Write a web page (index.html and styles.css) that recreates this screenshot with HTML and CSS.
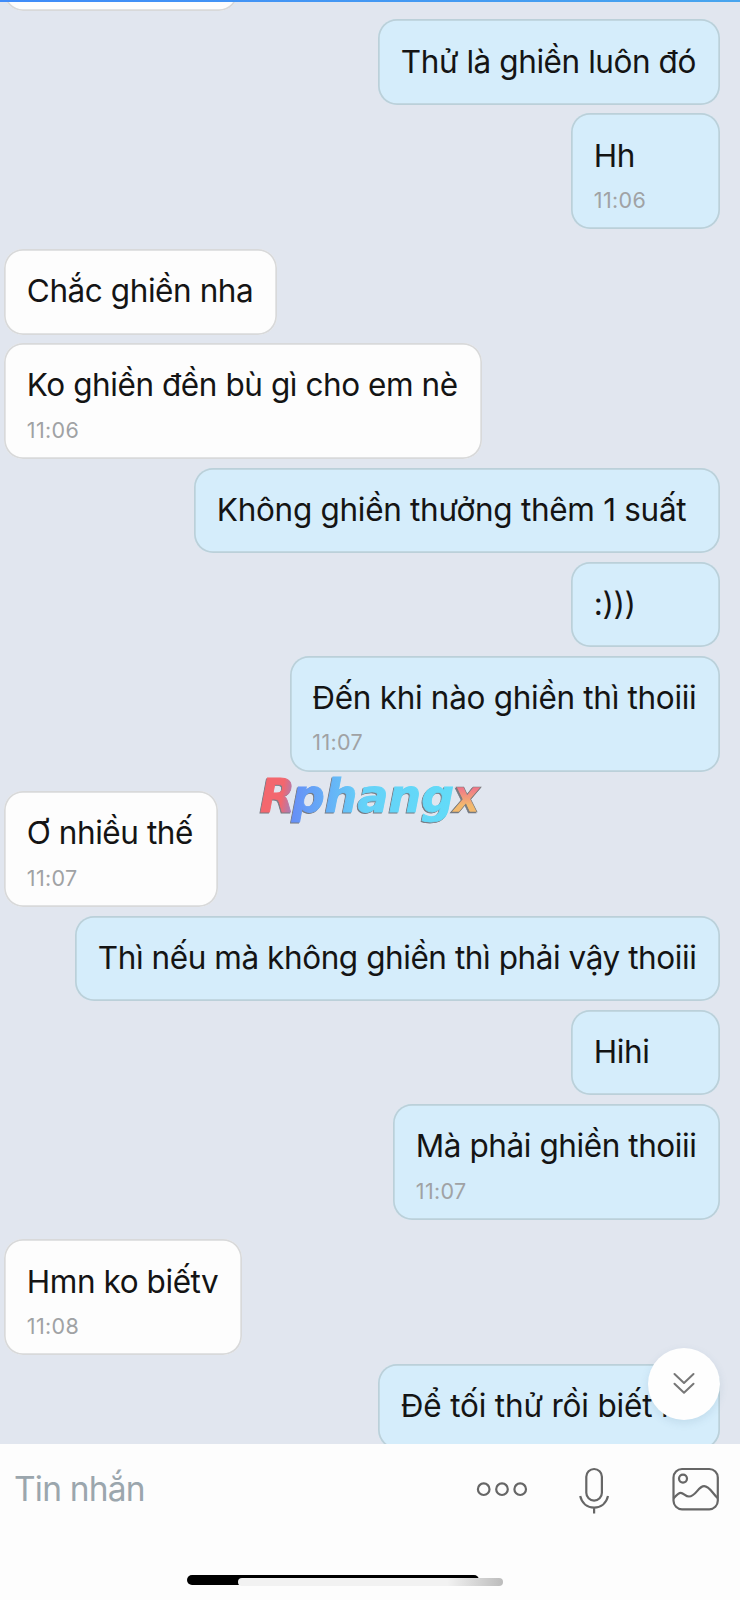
FILE: index.html
```html
<!DOCTYPE html>
<html lang="vi">
<head>
<meta charset="utf-8">
<title>Tin nhắn</title>
<link rel="stylesheet" href="styles.css">
</head>
<body>
<div class="phone">
  <div class="topline"></div>
  <main class="chat">
    <div class="msg in w-top"></div>
    <div class="msg out w-thu"><p>Thử là ghiền luôn đó</p></div>
    <div class="msg out timed w-min"><p>Hh</p><time>11:06</time></div>
    <div class="msg in turn w-chac"><p>Chắc ghiền nha</p></div>
    <div class="msg in timed w-ko"><p>Ko ghiền đền bù gì cho em nè</p><time>11:06</time></div>
    <div class="msg out w-khong"><p>Không ghiền thưởng thêm 1 suất</p></div>
    <div class="msg out w-min"><p>:)))</p></div>
    <div class="msg out timed w-den"><p>Đến khi nào ghiền thì thoiii</p><time>11:07</time></div>
    <div class="msg in timed turn w-nhieu"><p>Ơ nhiều thế</p><time>11:07</time></div>
    <div class="msg out w-thi"><p>Thì nếu mà không ghiền thì phải vậy thoiii</p></div>
    <div class="msg out w-min"><p>Hihi</p></div>
    <div class="msg out timed w-ma"><p>Mà phải ghiền thoiii</p><time>11:07</time></div>
    <div class="msg in timed turn w-hmn"><p>Hmn ko biếtv</p><time>11:08</time></div>
    <div class="msg out w-thu last"><p>Để tối thử rồi biết nè</p></div>
  </main>

  <footer class="composer">
    <div class="row">
      <span class="placeholder">Tin nhắn</span>
      <svg class="ico dots" width="52" height="50" viewBox="476 1464 52 50"><circle cx="483.7" cy="1489.2" r="5.8"/><circle cx="502" cy="1489.2" r="5.8"/><circle cx="520.2" cy="1489.2" r="5.8"/></svg>
      <svg class="ico mic" width="34" height="50" viewBox="577 1464 34 50"><rect x="586.3" y="1469" width="15.6" height="31.6" rx="7.8"/><path d="M580.2 1496c1.600 7 6.800 11.600 13.900 11.600s12.300-4.600 13.900-11.600M594.100 1507.600v6"/></svg>
      <svg class="ico pic" width="50" height="50" viewBox="670 1464 50 50"><rect x="673.500" y="1469" width="44.300" height="40.300" rx="8.500"/><circle cx="683" cy="1478.600" r="4"/><path d="M673.500 1498.500c3-3 4.500-5.700 7.200-5.700 3 0 4.700 3.700 8.300 3.700 7 0 9-10.300 15.200-10.300 5.300 0 8.300 7.300 13.600 12"/></svg>
    </div>
    <div class="home"><div class="home-light"></div></div>
  </footer>

  <button class="scroll" aria-label="Xuống cuối"><svg width="24" height="24" viewBox="0 0 24 24"><path d="M2.500 2l9.500 9 9.500-9M2.500 11.800l9.500 9 9.500-9"/></svg></button>

  <svg class="brand" width="240" height="60" viewBox="250 768 240 60">
    <defs>
      <linearGradient id="red" gradientUnits="userSpaceOnUse" x1="260" y1="790" x2="297" y2="796"><stop offset=".6" stop-color="#f3676e"/><stop offset="1" stop-color="#8c86d0"/></linearGradient>
      <linearGradient id="blue" gradientUnits="userSpaceOnUse" x1="292" y1="0" x2="452" y2="0"><stop offset="0" stop-color="#668ff6"/><stop offset=".45" stop-color="#65d2f8"/><stop offset="1" stop-color="#62dbf8"/></linearGradient>
      <linearGradient id="warm" gradientUnits="userSpaceOnUse" x1="0" y1="786" x2="0" y2="812"><stop offset=".1" stop-color="#f17888"/><stop offset=".75" stop-color="#f2b96e"/></linearGradient>
    </defs>
    <text x="260" y="811.5" textLength="35" lengthAdjust="spacingAndGlyphs" fill="url(#red)" stroke="url(#red)">R</text>
    <text x="292" y="811.5" textLength="162" lengthAdjust="spacingAndGlyphs" fill="url(#blue)" stroke="url(#blue)">phang</text>
    <text class="brand-x" x="453" y="811.5" textLength="27" lengthAdjust="spacingAndGlyphs" fill="url(#warm)">x</text>
  </svg>
</div>
</body>
</html>
```
FILE: styles.css
```css
* { box-sizing: border-box; }
body { margin: 0; background: #e1e6ef; font-family: Inter, "Liberation Sans", sans-serif; }
.phone { position: relative; width: 740px; height: 1600px; overflow: hidden; display: flex; flex-direction: column; }
.topline { position: absolute; z-index: 2; top: 0; left: 0; width: 100%; height: 1.5px; background: linear-gradient(90deg, #3f8bf8, #48a5ee); }
.chat { height: 1443.5px; flex: none; overflow: hidden; display: flex; flex-direction: column; align-items: flex-start; gap: 8.5px; padding: 0 20px 0 4.5px; }

.msg { flex: none; height: 85.5px; padding: 21.3px 0 0 22.8px; box-shadow: inset 0 0 0 1.7px #d8d9da; border-radius: 19px; background: #fdfdfd; white-space: nowrap; }
.msg p { margin: 0; font-size: 31.5px; line-height: 42px; color: #141414; letter-spacing: -.43px; }
.msg time { display: block; margin-top: 10.6px; font-size: 21.5px; line-height: 26px; color: #a0a2a4; letter-spacing: .35px; }
.timed { height: 116px; }
.out { align-self: flex-end; background: #d5edfb; box-shadow: inset 0 0 0 1.7px #bbd0d9; }
.turn { margin-top: 11.2px; }
.in { margin-left: -.5px; }

.w-top { width: 234px; margin-top: -74.7px; }
.w-thu { width: 342px; }
.w-min { width: 149px; }
.w-chac { width: 273px; }
.w-ko { width: 478px; }
.w-khong { width: 526px; }
.w-khong p, .w-den p { letter-spacing: -.3px; }
.w-den { width: 430.500px; }
.w-nhieu { width: 213.500px; }
.w-thi { width: 645px; }
.w-ma { width: 327px; }
.w-hmn { width: 238px; }
.last p { letter-spacing: -.18px; }

.composer { flex: 1; background: #fdfdfd; display: flex; flex-direction: column; }
.row { display: flex; align-items: center; padding: 20.5px 20px 0 14px; height: 70.5px; }
.placeholder { flex: 1; font-size: 33.500px; line-height: 44px; letter-spacing: -.8px; color: #9ba6ad; }
.ico { flex: none; fill: none; stroke: #666; stroke-width: 2.2; }
.mic { margin-left: 49px; }
.pic { margin-left: 59px; }
.home { width: 292px; height: 10px; margin: 61px 0 0 187px; border-radius: 5px; background: #000; }
.home-light { width: 265px; height: 8.5px; margin-left: 50.5px; position: relative; top: 2.5px; border-radius: 4.5px; background: linear-gradient(90deg, #f2f2f2 79%, #bcbcbc); }

.scroll { position: absolute; left: 647.7px; top: 1347.5px; width: 72.6px; height: 72.6px; padding: 0; border: 0; border-radius: 50%; background: #fefefe; box-shadow: 0 3px 8px rgba(60, 110, 140, .13); display: grid; place-items: center; }
.scroll svg { fill: none; stroke: #777; stroke-width: 2; stroke-linecap: round; stroke-linejoin: round; }

.brand { position: absolute; left: 250px; top: 768px; font: italic bold 46px "DejaVu Sans", sans-serif; stroke-width: .9px; filter: drop-shadow(-.5px 1.3px .4px #747982); }
.brand-x { stroke: #777b7d; stroke-width: .7px; }
```
